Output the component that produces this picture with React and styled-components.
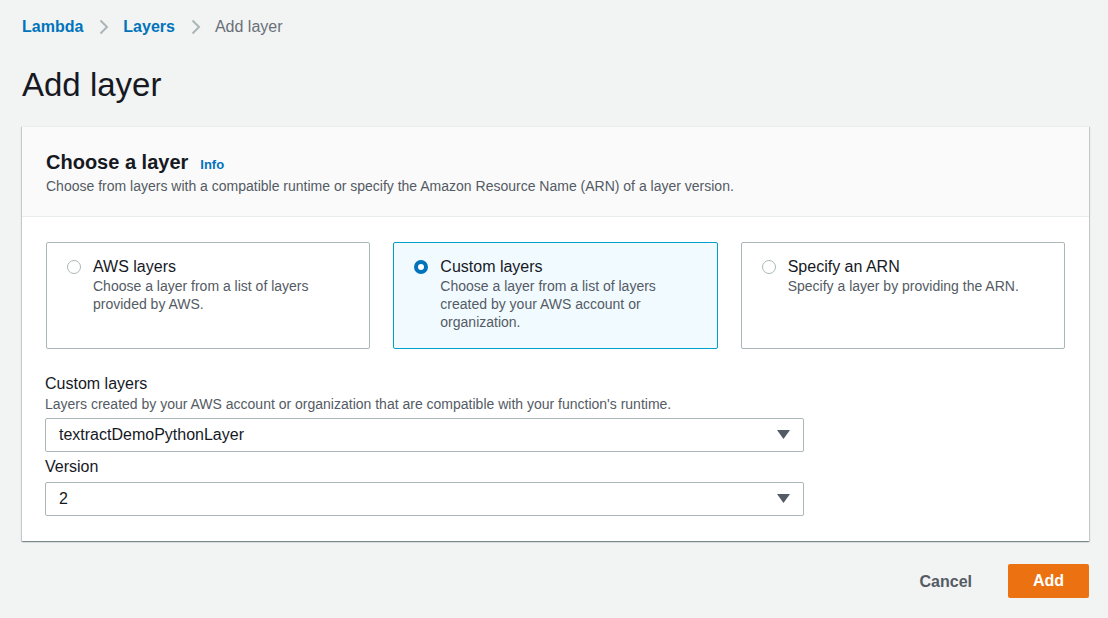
import styled, { createGlobalStyle } from "styled-components";
import { useState } from "react";

const GlobalStyle = createGlobalStyle`
  body {
    margin: 0;
    background: #f2f3f3;
    font-family: "Liberation Sans", Arial, sans-serif;
    color: #16191f;
  }
`;

const Page = styled.div`
  padding: 15px 19px 20px 22px;
`;

const Crumbs = styled.nav`
  display: flex;
  align-items: center;
  font-size: 16px;
  height: 24px;
`;

const Crumb = styled.span`
  color: ${(props) => (props.current ? "#687078" : "#0073bb")};
  font-weight: ${(props) => (props.current ? 400 : 700)};
`;

const Chevron = styled.svg`
  margin: 0 14px 0 16px;
`;

const Title = styled.h1`
  margin: 26px 0 21px 0;
  font-size: 33px;
  font-weight: 400;
  line-height: 40px;
`;

const Panel = styled.section`
  background: #fff;
  border-top: 1px solid #eaeded;
  box-shadow: 0 1px 1px 0 rgba(0, 28, 36, 0.3), 1px 1px 1px 0 rgba(0, 28, 36, 0.15),
    -1px 1px 1px 0 rgba(0, 28, 36, 0.15);
`;

const PanelHeader = styled.header`
  background: #fafafa;
  border-bottom: 1px solid #eaeded;
  padding: 22px 24px 21px 24px;
`;

const HeaderRow = styled.div`
  display: flex;
  align-items: baseline;
  gap: 12px;
`;

const PanelTitle = styled.h2`
  margin: 0;
  font-size: 20px;
  font-weight: 700;
  line-height: 26px;
`;

const Info = styled.a`
  color: #0073bb;
  font-size: 13px;
  font-weight: 700;
`;

const Description = styled.p`
  margin: 2px 0 0 0;
  font-size: 14px;
  line-height: 18px;
  color: #545b64;
`;

const PanelBody = styled.div`
  padding: 25px 24px 25px 23px;
`;

const Cards = styled.div`
  display: grid;
  grid-template-columns: repeat(3, 1fr);
  gap: 23px;
  margin: 0 0 24px 1px;
`;

const Card = styled.label`
  display: flex;
  gap: 12px;
  height: 107px;
  box-sizing: border-box;
  padding: 15px 20px;
  border: 1px solid ${(props) => (props.selected ? "#00a1c9" : "#aab7b8")};
  background: ${(props) => (props.selected ? "#f1faff" : "#fff")};
  border-radius: 2px;
  cursor: pointer;
`;

const Radio = styled.span`
  flex: none;
  width: 14px;
  height: 14px;
  margin-top: 2px;
  box-sizing: border-box;
  border-radius: 50%;
  border: ${(props) => (props.checked ? "4px solid #0073bb" : "1px solid #aab7b8")};
  background: #fff;
`;

const CardText = styled.div`
  display: flex;
  flex-direction: column;
`;

const CardTitle = styled.span`
  font-size: 16px;
  line-height: 18px;
`;

const CardDesc = styled.span`
  font-size: 14px;
  line-height: 18px;
  color: #545b64;
  margin-top: 1px;
  max-width: 240px;
`;

const Field = styled.div`
  width: 759px;
  & + & {
    margin-top: 4px;
  }
`;

const Label = styled.div`
  font-size: 16px;
  line-height: 22px;
`;

const Hint = styled.div`
  font-size: 14px;
  line-height: 18px;
  color: #545b64;
  margin-bottom: ${(props) => props.gap}px;
`;

const SelectBox = styled.div`
  display: flex;
  align-items: center;
  justify-content: space-between;
  height: 34px;
  box-sizing: border-box;
  margin-top: ${(props) => props.top || 0}px;
  padding: 0 13px 0 13px;
  border: 1px solid #aab7b8;
  border-radius: 2px;
  font-size: 16px;
  background: #fff;
`;

const Footer = styled.div`
  display: flex;
  justify-content: flex-end;
  align-items: center;
  gap: 36px;
  margin-top: 23px;
`;

const TextButton = styled.button`
  border: none;
  background: none;
  font-family: inherit;
  font-size: 16px;
  font-weight: 700;
  color: #545b64;
  padding: 0;
  margin-top: 2px;
`;

const PrimaryButton = styled.button`
  width: 81px;
  height: 34px;
  border: none;
  border-radius: 2px;
  background: #ec7211;
  color: #fff;
  font-family: inherit;
  font-size: 16px;
  font-weight: 700;
`;

const Caret = () => (
  <svg width="13" height="10" viewBox="0 0 13 10">
    <path d="M0 0 H13 L6.5 9 Z" fill="#545b64" />
  </svg>
);

const Sep = () => (
  <Chevron width="10" height="16" viewBox="0 0 10 16">
    <path d="M1.5 1.5 L8 8 L1.5 14.5" fill="none" stroke="#aab7b8" strokeWidth="2" />
  </Chevron>
);

const options = [
  { id: "aws", title: "AWS layers", desc: "Choose a layer from a list of layers provided by AWS." },
  {
    id: "custom",
    title: "Custom layers",
    desc: "Choose a layer from a list of layers created by your AWS account or organization.",
  },
  { id: "arn", title: "Specify an ARN", desc: "Specify a layer by providing the ARN." },
];

export default function App() {
  const [choice, setChoice] = useState("custom");

  return (
    <Page>
      <GlobalStyle />
      <Crumbs>
        <Crumb>Lambda</Crumb>
        <Sep />
        <Crumb>Layers</Crumb>
        <Sep />
        <Crumb current>Add layer</Crumb>
      </Crumbs>
      <Title>Add layer</Title>
      <Panel>
        <PanelHeader>
          <HeaderRow>
            <PanelTitle>Choose a layer</PanelTitle>
            <Info>Info</Info>
          </HeaderRow>
          <Description>
            Choose from layers with a compatible runtime or specify the Amazon Resource Name (ARN) of a layer version.
          </Description>
        </PanelHeader>
        <PanelBody>
          <Cards>
            {options.map((o) => (
              <Card key={o.id} selected={choice === o.id} onClick={() => setChoice(o.id)}>
                <Radio checked={choice === o.id} />
                <CardText>
                  <CardTitle>{o.title}</CardTitle>
                  <CardDesc>{o.desc}</CardDesc>
                </CardText>
              </Card>
            ))}
          </Cards>
          <Field>
            <Label>Custom layers</Label>
            <Hint gap={5}>Layers created by your AWS account or organization that are compatible with your function's runtime.</Hint>
            <SelectBox>
              <span>textractDemoPythonLayer</span>
              <Caret />
            </SelectBox>
          </Field>
          <Field>
            <Label>Version</Label>
            <SelectBox top={4}>
              <span>2</span>
              <Caret />
            </SelectBox>
          </Field>
        </PanelBody>
      </Panel>
      <Footer>
        <TextButton>Cancel</TextButton>
        <PrimaryButton>Add</PrimaryButton>
      </Footer>
    </Page>
  );
}
